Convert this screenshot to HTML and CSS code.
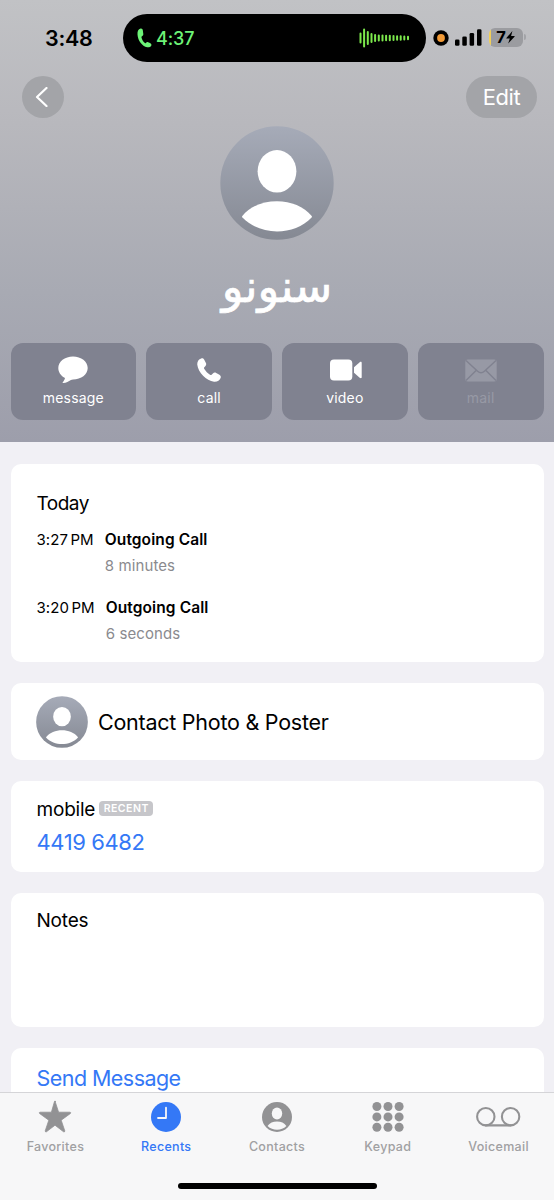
FILE: index.html
```html
<!DOCTYPE html>
<html lang="en">
<head>
<meta charset="utf-8">
<title>Contact</title>
<link rel="stylesheet" href="styles.css">
</head>
<body>
<svg class="defs" width="0" height="0">
  <defs>
    <linearGradient id="avatarFill" x1="0" y1="0" x2="0" y2="1">
      <stop offset="0" stop-color="#a6abb8"/><stop offset="1" stop-color="#858993"/>
    </linearGradient>
    <symbol id="avatar" viewBox="0 0 114 114">
      <circle cx="57" cy="57" r="56.7" fill="url(#avatarFill)"/>
      <ellipse cx="57" cy="45.3" rx="19.4" ry="21.2" fill="#fff"/>
      <path d="M22.3 90C30 80.500 43 75.200 57 75.200S84 80.500 91.700 90C92 90.500 92 91 91.600 91.500C83 100.500 70 105.500 57 105.500S31 100.500 22.400 91.500C22 91 22 90.500 22.300 90Z" fill="#fff"/>
    </symbol>
    <symbol id="phone" viewBox="0 0 24 24">
      <path d="M4.200 0.400C1.500 1.300 0 3.600 0.300 6.800C1 14.200 9.500 22.900 17 23.700C20.200 24 22.700 22.400 23.600 20C24.100 18.600 23.600 17.500 22.400 16.700L19.200 15C17.900 14.300 16.800 14.600 15.900 15.500L14.600 16.700C14.100 17.100 13.600 17.100 13 16.700C10.700 15.200 8.700 13.100 7.300 10.900C6.900 10.300 6.900 9.800 7.300 9.300L8.500 7.900C9.300 6.900 9.500 5.900 8.800 4.700L7.100 1.600C6.500 0.500 5.500 0 4.200 0.400Z" fill="currentColor"/>
    </symbol>
  </defs>
</svg>
<div class="screen">
  <header class="hero">
    <div class="status">
      <span class="clock">3:48</span>
      <div class="island">
        <svg class="island-phone" width="15" height="20" viewBox="0 0 15 20"><path d="M3.600.500C1.200 1.100.300 3.400.500 6.500C.900 12.500 5 18.200 10.200 19.300C12.300 19.600 14 18.700 14.400 17.200C14.600 16.200 14 15.400 13 14.900L11.100 14.200C10.100 13.900 9.500 14.300 8.900 14.900C8.500 15.300 8 15.200 7.600 14.800C6.100 13.300 5 11.400 4.500 9.400C4.300 8.800 4.500 8.400 5 8.200C6 7.700 6.400 7 6.300 6L5.800 2.200C5.600 1 4.800.200 3.600.500Z"/></svg>
        <span class="duration">4:37</span>
        <svg class="wave" width="52" height="20" viewBox="0 0 52 20"><path d="M1.500 5.500v9M5.100 1.500v17M8.800 4v12M12.500 6v8M16.100 7v6M19.800 7.500v5M23.500 7.500v5M27.100 7.700v4.600M30.800 7.700v4.600M34.500 7.900v4.200M38.100 8.200v3.600M41.700 8.300v3.400M45.300 8.500v3M49 8.800v2.400"/></svg>
      </div>
      <svg class="mic" width="16" height="16" viewBox="0 0 16 16"><circle cx="8" cy="8" r="7.700"/><circle class="mic-dot" cx="8" cy="8" r="3.900"/></svg>
      <svg class="signal" width="27" height="18" viewBox="0 0 27 18"><rect x="0" y="10.500" width="4.500" height="6.200" rx="1.300"/><rect x="7.300" y="7.500" width="4.500" height="9.200" rx="1.300"/><rect x="14.600" y="4" width="4.500" height="12.700" rx="1.300"/><rect x="22" y="0.300" width="4.500" height="16.400" rx="1.300"/></svg>
      <div class="battery"><span>7</span><svg width="9" height="13" viewBox="0 0 9 13"><path d="M6.400 0L.400 7.100C.200 7.400.300 7.600.700 7.600H3.800L2.200 12.600L8.500 5.700C8.800 5.400 8.600 5 8.200 5H5.100Z"/></svg></div>
      <i class="battery-cap"></i>
    </div>
    <nav class="nav">
      <button class="back" aria-label="Back"><svg width="13" height="20" viewBox="0 0 13 20"><path d="M11.500 1L2 10L11.500 19"/></svg></button>
      <button class="edit">Edit</button>
    </nav>
    <svg class="portrait" width="114" height="114"><use href="#avatar"/></svg>
    <h1 class="name" lang="ar" dir="rtl">سنونو</h1>
    <div class="actions">
      <button class="action"><svg width="30" height="28" viewBox="0 0 30 28"><path d="M15 .5C6.800.5.300 5.500.300 12C.300 16.100 2.800 19.700 6.600 21.700C6.900 21.900 7 22.200 6.900 22.500C6.500 23.900 5.600 25.200 4.800 26.200C4.400 26.800 4.700 27.200 5.300 27.100C8.300 26.700 10.600 25.500 12.900 24C13.500 23.700 14.200 23.500 15 23.500C23.200 23.500 29.700 18.500 29.700 12S23.200.5 15 .5Z"/></svg><span>message</span></button>
      <button class="action"><svg width="24" height="24"><use href="#phone"/></svg><span>call</span></button>
      <button class="action"><svg class="camera" width="32" height="22" viewBox="0 0 32 22"><rect x="0" y="0.500" width="22.300" height="21" rx="4"/><path d="M24 8.200L29.700 3.300C30.800 2.400 31.700 2.800 31.700 4V18C31.700 19.200 30.800 19.600 29.700 18.700L24 13.800Z"/></svg><span>video</span></button>
      <button class="action disabled"><svg width="32" height="23" viewBox="0 0 32 23"><rect x="0.300" y="0.500" width="31.400" height="22" rx="2.500"/><path class="fold" d="M1 1.500L12.600 12.200Q16 15.200 19.400 12.200L31 1.500M1 21.500L11.300 11.200M31 21.500L20.700 11.200"/></svg><span>mail</span></button>
    </div>
  </header>
  <main class="cards">
    <section class="card history">
      <h2>Today</h2>
      <div class="entry"><time>3:27 PM</time><div><b>Outgoing Call</b><p>8 minutes</p></div></div>
      <div class="entry later"><time>3:20 PM</time><div><b>Outgoing Call</b><p>6 seconds</p></div></div>
    </section>
    <section class="card poster"><svg width="52" height="52"><use href="#avatar"/></svg><span>Contact Photo &amp; Poster</span></section>
    <section class="card number">
      <div class="label"><span>mobile</span><em>RECENT</em></div>
      <a>4419 6482</a>
    </section>
    <section class="card notes">Notes</section>
    <section class="card send"><a>Send Message</a></section>
  </main>
  <footer class="tabbar">
    <div class="tabs">
      <div class="tab"><svg width="34" height="34" viewBox="0 0 34 34"><path d="M17 2.200L20.600 13.200H32.100Q33.200 13.600 32.400 14.500L23.200 21.200L26.800 31.900Q26.800 33.200 25.600 32.800L17 26.200L8.400 32.800Q7.200 33.200 7.200 31.900L10.800 21.200L1.600 14.500Q.8 13.600 1.900 13.200H13.400L16.400 2.800Q17 1 17.600 2.800Z" stroke="#929294" stroke-width=".8" stroke-linejoin="round"/></svg><span>Favorites</span></div>
      <div class="tab active"><svg width="34" height="34" viewBox="0 0 34 34"><circle cx="17" cy="18" r="15"/><path class="hands" d="M17 8.700V19H9"/></svg><span>Recents</span></div>
      <div class="tab"><svg width="34" height="34" viewBox="0 0 34 34"><circle cx="17" cy="18" r="15"/><ellipse class="cut" cx="17" cy="14.500" rx="5.200" ry="5.900"/><path class="cut" d="M7.600 27C9.600 24 13 22.600 17 22.600S24.400 24 26.400 27C23.800 29.500 20.600 30.700 17 30.700S10.200 29.500 7.600 27Z"/></svg><span>Contacts</span></div>
      <div class="tab"><svg width="34" height="34" viewBox="0 0 34 34"><circle cx="5.900" cy="7.500" r="4.500"/><circle cx="17" cy="7.500" r="4.500"/><circle cx="28.100" cy="7.500" r="4.500"/><circle cx="5.900" cy="17.900" r="4.500"/><circle cx="17" cy="17.900" r="4.500"/><circle cx="28.100" cy="17.900" r="4.500"/><circle cx="5.900" cy="28.300" r="4.500"/><circle cx="17" cy="28.300" r="4.500"/><circle cx="28.100" cy="28.300" r="4.500"/></svg><span>Keypad</span></div>
      <div class="tab"><svg width="46" height="34" viewBox="0 0 46 34"><g class="tape"><circle cx="9.800" cy="17.700" r="8.700"/><circle cx="34.600" cy="17.700" r="8.700"/><path d="M9.800 26.400H34.600"/></g></svg><span>Voicemail</span></div>
    </div>
    <div class="home"></div>
  </footer>
</div>
</body>
</html>
```
FILE: styles.css
```css
* { box-sizing: border-box; }
body { margin: 0; font-family: Inter, "Liberation Sans", sans-serif; background: #f1f0f5; color: #000; }
h1, h2, p { margin: 0; font-weight: 400; }
button { border: 0; padding: 0; font: inherit; color: #fff; }
svg { display: block; flex: none; }
.defs { position: absolute; }
.screen { width: 554px; height: 1200px; overflow: hidden; display: flex; flex-direction: column; }
.hero { height: 442px; flex: none; display: flex; flex-direction: column; align-items: center; background: linear-gradient(#c1c2c5, #b8b8bd 28%, #a8aab3 66%, #9d9eab); }
.status { width: 100%; height: 76px; padding: 14px 0 0 45px; display: flex; align-items: flex-start; }
.clock { width: 78px; font-size: 21.5px; line-height: 48px; font-weight: 600; letter-spacing: -.3px; }
.island { width: 303px; height: 48px; border-radius: 24px; background: #000; display: flex; align-items: center; padding: 0 15px 0 13.500px; color: #6df377; }
.island-phone { fill: currentColor; }
.duration { margin-left: 4.500px; font-size: 18px; font-weight: 500; letter-spacing: -.1px; }
.wave { margin-left: auto; stroke: #7ce84c; stroke-width: 2; stroke-linecap: round; fill: none; }
.mic { margin: 16px 0 0 6.500px; }
.mic-dot { fill: #f19a37; }
.signal { margin: 15px 0 0 6px; }
.battery { margin: 14px 0 0 7px; width: 34px; height: 19px; border-radius: 6px; background: linear-gradient(90deg, #f2cf58 2px, #9b9ca0 2px); display: flex; align-items: center; justify-content: center; gap: 0; font-size: 16.500px; font-weight: 700; line-height: 19px; }
.battery-cap { width: 2px; height: 6px; margin: 20px 0 0 1px; background: #a3a4a8; border-radius: 0 2px 2px 0; }
.nav { width: 100%; height: 42px; padding: 0 17px 0 22px; display: flex; justify-content: space-between; align-items: center; }
.back, .edit { height: 41.500px; background: #a3a4a8; border-radius: 21px; }
.back { width: 41.500px; display: flex; align-items: center; padding-left: 13px; }
.back svg { fill: none; stroke: #fff; stroke-width: 2.200; stroke-linecap: round; stroke-linejoin: round; }
.edit { width: 71px; font-size: 22px; letter-spacing: -.4px; }
.portrait { margin-top: 7.500px; }
.name { height: 103.500px; color: #fff; font-family: "DejaVu Sans", sans-serif; font-size: 45px; line-height: 93px; -webkit-text-stroke: .7px #fff; }
.actions { width: 100%; padding: 0 10.500px; display: grid; grid-template-columns: repeat(4, 1fr); gap: 10px; }
.action { height: 77px; border-radius: 12px; background: #808290; display: grid; grid-template-rows: 29px 20px; align-content: start; padding-top: 12.500px; row-gap: 3.500px; justify-items: center; align-items: center; font-size: 14px; line-height: 20px; letter-spacing: .2px; }
.action svg { fill: currentColor; }
.action .camera { margin-left: 2px; }
.action.disabled { color: #9799a5; }
.fold { fill: none; stroke: #808290; stroke-width: 1.500; }
.cards { flex: 1; min-height: 0; padding: 22px 10.500px 0; display: flex; flex-direction: column; gap: 21px; overflow: hidden; }
.card { flex: none; background: #fff; border-radius: 10px; padding: 0 26px; }
.history { height: 198px; padding-top: 26px; }
.history h2 { font-size: 19px; line-height: 28px; letter-spacing: -.5px; }
.entry { display: flex; gap: 11px; margin-top: 9px; font-size: 15.500px; line-height: 26px; }
.entry.later { margin-top: 16px; }
.entry time { font-size: 15px; word-spacing: -2px; letter-spacing: .1px; }
.entry b { font-weight: 600; display: block; letter-spacing: .1px; }
.entry p { color: #8a8a8e; font-size: 15px; letter-spacing: .1px; }
.poster { height: 77px; display: flex; align-items: center; gap: 10.500px; padding-left: 25px; font-size: 21.500px; letter-spacing: -.25px; }
.number { height: 91px; padding-top: 15px; }
.label { display: flex; align-items: center; height: 26px; font-size: 19px; letter-spacing: -.2px; }
.label em { margin: -2px 0 0 4px; width: 54px; height: 15px; border-radius: 4px; background: #c6c6ca; color: #fff; font: 600 10.500px/15px Inter, sans-serif; letter-spacing: .5px; text-align: center; }
.card a { display: block; color: #3478f6; font-size: 22px; line-height: 30px; letter-spacing: -.4px; }
.number a { margin-top: 5px; }
.notes { height: 134px; padding-top: 14px; font-size: 19px; line-height: 28px; letter-spacing: -.2px; }
.send { height: 77px; padding-top: 15px; }
.send a { font-size: 21.500px; letter-spacing: -.55px; }
.tabbar { height: 108px; flex: none; border-top: 1px solid #d5d5d8; background: #f7f7f8; display: flex; flex-direction: column; align-items: center; }
.tabs { width: 100%; display: grid; grid-template-columns: repeat(5, 1fr); padding-top: 6px; }
.tab { display: flex; flex-direction: column; align-items: center; gap: 4px; color: #a0a0a2; font-size: 12.500px; font-weight: 500; line-height: 20px; letter-spacing: .3px; }
.tab svg { fill: #929294; }
.tab.active, .tab.active svg { color: #3478f6; fill: #3478f6; }
.tab .hands, .tab .tape { fill: none; stroke: #f7f7f8; stroke-width: 1.800; stroke-linecap: round; stroke-linejoin: round; }
.tab .tape { stroke: #929294; stroke-width: 2.100; }
.cut { fill: #f7f7f8; }
.home { width: 199px; height: 6px; margin-top: 26px; border-radius: 3px; background: #000; }
```
